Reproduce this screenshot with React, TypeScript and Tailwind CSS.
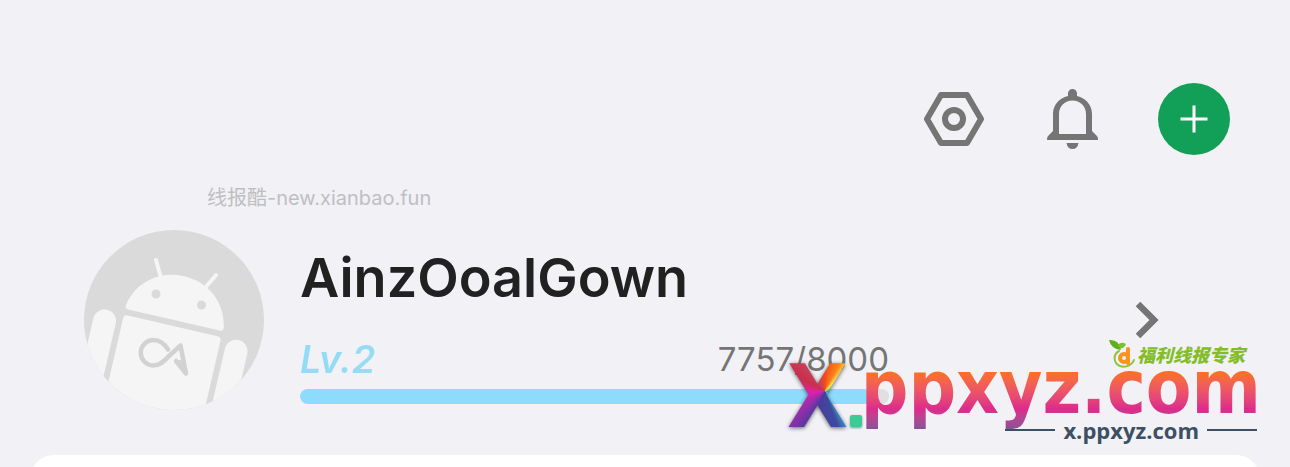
import React from 'react';

const user = {
  name: 'AinzOoalGown',
  level: 2,
  exp: 7757,
  nextExp: 8000,
};

const SettingsIcon: React.FC = () => (
  <svg viewBox="0 0 60 60" className="size-[60px]" fill="none" stroke="currentColor" strokeWidth="6" strokeLinejoin="round" aria-hidden="true">
    <path d="M17 6H43L57 30L43 54H17L3 30Z" />
    <circle cx="30" cy="30" r="9" />
  </svg>
);

const BellIcon: React.FC = () => (
  <svg viewBox="0 0 60 60" className="size-[60px]" fill="currentColor" aria-hidden="true">
    <path
      fillRule="evenodd"
      d="M27 7V4.5a4.5 4.5 0 0 1 9 0V7C45 9 51 16 51 25V42L56 47Q57 48 57 51H6Q6 48 7 47L12 42V25C12 16 18 9 27 7ZM18 45H45V25C45 17 39 11.500 31.500 11.500S18 17 18 25Z"
    />
    <path d="M25.500 54H37.500Q36.500 60 31.500 60T25.500 54Z" />
  </svg>
);

const Avatar: React.FC = () => (
  <svg viewBox="0 0 180 180" className="size-[180px] shrink-0 rounded-full bg-[#dadada]" role="img" aria-label="avatar">
    <g fill="#f5f5f5" transform="translate(90 90) rotate(13)">
      <path d="M-47 0Q-51 0 -50 -5C-45 -29 -25 -45 0 -45S45 -29 50 -5Q51 0 47 0Z" />
      <path d="M-46 6H46Q50 6 50 10V110H-50V10Q-50 6 -46 6Z" />
      <rect x="-79" y="5" width="23" height="76" rx="11.500" />
      <rect x="56" y="5" width="23" height="76" rx="11.500" />
    </g>
    <g stroke="#f5f5f5" strokeWidth="4" strokeLinecap="round">
      <path d="M72 30L77 48" />
      <path d="M132 45L121 58" />
    </g>
    <circle cx="72" cy="64" r="4.500" fill="#dadada" />
    <circle cx="117.500" cy="75" r="4.500" fill="#dadada" />
    <path
      d="M84 119.500C80 113 75 110 69.500 110A12.700 12.700 0 1 0 69.500 135.500C76 135.500 80 131 84 127L96.500 115.500L102 143.500L92 131"
      fill="none"
      stroke="#d2d2d2"
      strokeWidth="4.500"
      strokeLinecap="round"
      strokeLinejoin="round"
    />
    <path d="M92 130L97 130L102 143Z" fill="#d2d2d2" />
  </svg>
);

const FruitLogo: React.FC = () => (
  <svg viewBox="0 0 28 30" className="h-[30px] w-7" aria-hidden="true">
    <path d="M0 1Q10 0 12 11Q2 10 0 1Z" fill="#5fae1c" />
    <path d="M9 6Q12 2 17 5Q15 10 11 9Z" fill="#7cc02a" />
    <path d="M10 12C4 15 4 24 11 27C17 29 23 26 25 21" fill="none" stroke="#8cc63f" strokeWidth="2" strokeLinecap="round" />
    <circle cx="15" cy="19" r="4" fill="none" stroke="#f7931e" strokeWidth="4" />
    <path d="M19 10V24" stroke="#f7931e" strokeWidth="4" strokeLinecap="round" />
  </svg>
);

const SponsorMark: React.FC = () => (
  <div className="pointer-events-none absolute top-[338px] right-[33px] h-[104px] w-[470px]">
    <div className="absolute top-0 right-3 flex items-center">
      <FruitLogo />
      <span className="font-['Noto_Sans_CJK_SC',sans-serif] text-[18px] leading-8 font-black text-[#84bd28] italic">福利线报专家</span>
    </div>
    <div className="absolute top-[3px] left-0 font-['DejaVu_Sans_Condensed','DejaVu_Sans',sans-serif] text-[88px] leading-[112px] font-bold drop-shadow-[0_1px_2px_rgba(0,0,0,0.6)]">
      <span className="bg-[conic-gradient(from_0deg_at_38px_46px,#f04a1c_0deg,#f9821b_28deg,#f5d643_40deg,#e8e060_46deg,#3aa84a_95deg,#3ccfe0_125deg,#3ab0d8_142deg,#3e4a9c_160deg,#4a3aa0_205deg,#8a30a8_225deg,#e020b0_262deg,#c8304a_300deg,#c8405c_325deg,#f04a1c_360deg)] bg-clip-text text-transparent">X</span>
    </div>
    <span className="absolute bottom-[15px] left-[63px] size-3 rounded-xs bg-[#3ccb94] drop-shadow-[0_1px_1px_rgba(0,0,0,0.4)]" />
    <div className="absolute top-[5px] -right-1 bg-linear-to-b from-[#fb6f26] from-35% via-[#dd2a8b] via-75% to-[#7d5299] bg-clip-text font-['DejaVu_Sans_Condensed','DejaVu_Sans',sans-serif] text-[74px] leading-[88px] font-bold text-transparent">
      ppxyz.com
    </div>
    <div className="absolute right-0 bottom-0 flex items-center gap-2 text-[#3d5063]">
      <span className="h-0.5 w-[50px] bg-current" />
      <span className="font-['Open_Sans',sans-serif] text-[22px] leading-6 font-bold">x.ppxyz.com</span>
      <span className="h-0.5 w-[50px] bg-current" />
    </div>
  </div>
);

const App: React.FC = () => {
  return (
    <div className="relative flex min-h-screen flex-col overflow-hidden bg-[#f1f1f6] font-['Inter',sans-serif]">
      {/* Top actions */}
      <header className="flex items-center justify-end gap-[57px] pt-[83px] pr-[60px] text-[#757575]">
        <button type="button" aria-label="Settings">
          <SettingsIcon />
        </button>
        <button type="button" aria-label="Notifications">
          <BellIcon />
        </button>
        <button type="button" aria-label="Add" className="flex size-[72px] items-center justify-center rounded-full bg-[#129f57] text-white">
          <svg viewBox="0 0 28 28" className="size-7" stroke="currentColor" strokeWidth="3" aria-hidden="true">
            <path d="M14 0.500V27.500M0.500 14H27.500" />
          </svg>
        </button>
      </header>

      <p className="mt-7 pl-[207px] font-['Inter','Noto_Sans_CJK_SC',sans-serif] text-[20px] leading-[30px] text-[#bfbfc2]">
        线报酷-new.xianbao.fun
      </p>

      {/* Profile */}
      <main className="mt-[17px] flex items-center pr-[131px] pl-[84px]">
        <Avatar />
        <div className="ml-9 max-w-[589px] flex-1 pt-2">
          <h1 className="text-[54px] leading-[66px] font-semibold text-[#212121]">{user.name}</h1>
          <div className="mt-6 flex items-center justify-between leading-12">
            <span className="bg-linear-to-br from-[#8ddcff] to-[#9adcec] bg-clip-text text-[38px] font-semibold text-transparent italic">
              Lv.{user.level}
            </span>
            <span className="text-[33px] text-[#757575]">
              {user.exp}/{user.nextExp}
            </span>
          </div>
          <div className="mt-1.5 h-[15px] overflow-hidden rounded-full bg-[#e0e0e3]">
            <div className="h-full rounded-full bg-[#8ddcfd]" style={{ width: `${(user.exp / user.nextExp) * 100}%` }} />
          </div>
        </div>
        <button type="button" aria-label="Open profile" className="ml-auto text-[#757575]">
          <svg viewBox="0 0 24 38" className="h-[38px] w-6" fill="none" stroke="currentColor" strokeWidth="6.500" aria-hidden="true">
            <path d="M3 3L19 19L3 35" />
          </svg>
        </button>
      </main>

      {/* Next card */}
      <section className="mx-[30px] mt-[45px] -mb-9 min-h-12 flex-1 rounded-t-3xl bg-white" />

      <SponsorMark />
    </div>
  );
};

export default App;
